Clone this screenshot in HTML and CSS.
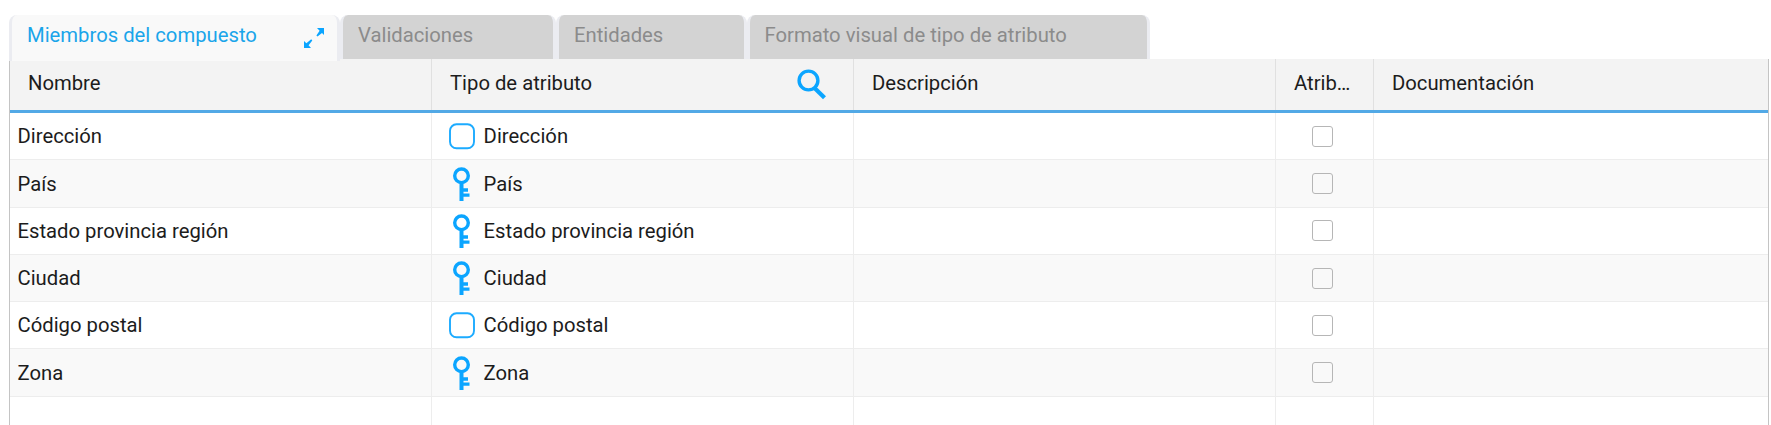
FILE: index.html
```html
<!DOCTYPE html>
<html lang="es">
<head>
<meta charset="utf-8">
<title>Miembros del compuesto</title>
<link rel="stylesheet" href="styles.css">
</head>
<body>
<svg class="defs" width="0" height="0" aria-hidden="true">
  <symbol id="key" viewBox="0 0 26 36">
    <circle cx="12.500" cy="9.800" r="6.800" fill="none" stroke="#0ba5ff" stroke-width="3.400"/>
    <path d="M10.500 16.500h4v5.700h4.500v3.500h-4.500v1.700h6v3.300h-6v4.300h-4z" fill="#0ba5ff"/>
  </symbol>
  <symbol id="box" viewBox="0 0 26 36">
    <rect x="1" y="6.300" width="24" height="24" rx="6.500" fill="#fff" stroke="#1cabff" stroke-width="1.900"/>
  </symbol>
</svg>
<nav class="tabs">
  <div class="tab active"><span>Miembros del compuesto</span>
    <svg class="expand" width="20" height="20" viewBox="0 0 20 20"><path d="M13 0H20v7l-2-2-4.500 3.600-1.100-1.100L15.600 2.800zM0 13l2.400 2.200L7.200 11.300 8.300 12.400 4.600 17.200 7 20H0z" fill="#0ba5ff"/></svg>
  </div>
  <div class="tab validations"><span>Validaciones</span></div>
  <div class="tab entities"><span>Entidades</span></div>
  <div class="tab format"><span>Formato visual de tipo de atributo</span></div>
</nav>
<main class="grid">
  <div class="row head">
    <div>Nombre</div>
    <div class="type">Tipo de atributo
      <svg class="search" width="30" height="32" viewBox="0 0 30 32"><circle cx="11.500" cy="11.500" r="9.400" fill="none" stroke="#0ba5ff" stroke-width="3.400"/><path d="M17 18.500L27.500 28.800" stroke="#0ba5ff" stroke-width="4.200"/></svg>
    </div>
    <div>Descripción</div>
    <div class="clip">Atributo</div>
    <div>Documentación</div>
  </div>
  <div class="row"><div>Dirección</div><div class="type"><svg class="icon"><use href="#box"/></svg>Dirección</div><div></div><div class="check"><i></i></div><div></div></div>
  <div class="row"><div>País</div><div class="type"><svg class="icon"><use href="#key"/></svg>País</div><div></div><div class="check"><i></i></div><div></div></div>
  <div class="row"><div>Estado provincia región</div><div class="type"><svg class="icon"><use href="#key"/></svg>Estado provincia región</div><div></div><div class="check"><i></i></div><div></div></div>
  <div class="row"><div>Ciudad</div><div class="type"><svg class="icon"><use href="#key"/></svg>Ciudad</div><div></div><div class="check"><i></i></div><div></div></div>
  <div class="row"><div>Código postal</div><div class="type"><svg class="icon"><use href="#box"/></svg>Código postal</div><div></div><div class="check"><i></i></div><div></div></div>
  <div class="row"><div>Zona</div><div class="type"><svg class="icon"><use href="#key"/></svg>Zona</div><div></div><div class="check"><i></i></div><div></div></div>
  <div class="row"><div></div><div></div><div></div><div></div><div></div></div>
</main>
</body>
</html>
```
FILE: styles.css
```css
* { box-sizing: border-box; }
body {
  margin: 0;
  height: 425px;
  overflow: hidden;
  padding: 15px 2px 0 9px;
  background: #fff;
  color: #1c1c1c;
  font: 20.25px/24px Roboto, sans-serif;
}
.defs { display: block; }
.tabs { display: flex; height: 44px; }
.tab {
  display: flex;
  justify-content: space-between;
  height: 44px;
  padding: 8px 13px 0 15px;
  border: solid #ebecf1;
  border-width: 0 3px;
  border-radius: 8px 8px 0 0;
  background: #d3d3d3;
  color: #8b8b8b;
  white-space: nowrap;
}
.active {
  width: 331px;
  height: 46px;
  z-index: 1;
  background: #f9f9f9;
  color: #1aa5ea;
}
.validations { width: 216px; }
.entities { width: 190.500px; }
.format { width: 403px; }
.expand { margin-top: 5px; }
.grid {
  height: 366px;
  overflow: hidden;
  border: solid #c4c4c4;
  border-width: 0 1px;
}
.row {
  display: grid;
  grid-template-columns: 422px 422px 422px 98px 1fr;
  height: 47.25px;
  background: #fff;
}
.row:nth-child(odd) { background: #f9f9f9; }
.row:last-child { background: #fff; }
.row > div {
  display: flex;
  align-items: center;
  min-width: 0;
  padding: 0.4px 7.5px 0;
  border-right: 1px solid #ededed;
  border-bottom: 1px solid #ededed;
  white-space: nowrap;
}
.row > div:last-child { border-right: 0; }
.row > .type { padding-left: 17px; }
.row > .check { justify-content: center; padding: 0.6px 5px 0 0; }
.check i {
  width: 21px;
  height: 21px;
  border: 1px solid #b6b6b6;
  border-radius: 3px;
}
.icon { width: 26px; height: 36px; margin-right: 8.6px; }
.row.head {
  height: 54px;
  border-bottom: 3px solid #52a9e6;
  background: #f3f3f3;
}
.row.head > div {
  padding: 0 17px 3px 18px;
  border-right-color: #e0e0e0;
  border-bottom: 0;
}
.row.head > .type { justify-content: space-between; padding-right: 26px; }
.search { position: relative; top: 2px; }
.row.head > .clip { display: block; padding: 12px 17px 0 18px; overflow: hidden; text-overflow: ellipsis; }
```
